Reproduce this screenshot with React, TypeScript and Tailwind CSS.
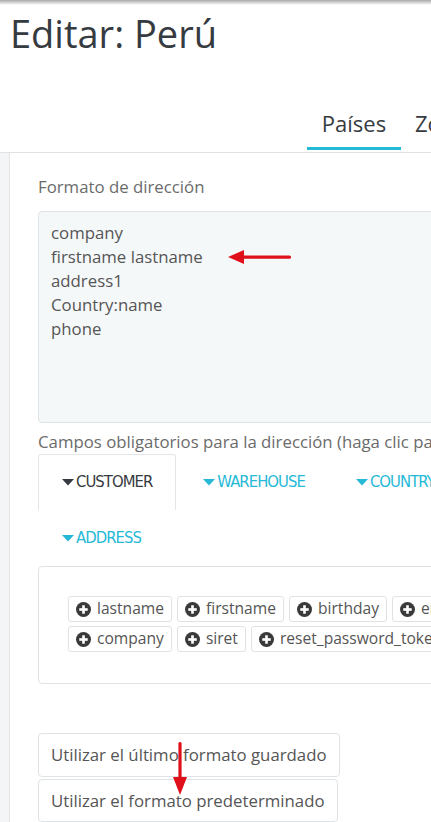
import React from "react";

const Caret = ({ color }: { color: string }) => (
  <svg width="12" height="7" viewBox="0 0 12 7" className="mr-[2px]">
    <polygon points="0,0 12,0 6,6.5" fill={color} />
  </svg>
);

const Plus = () => (
  <svg width="15" height="15" viewBox="0 0 16 16" className="mr-[6px] shrink-0">
    <circle cx="8" cy="8" r="8" fill="#3a3a3a" />
    <rect x="3.5" y="6.6" width="9" height="2.8" fill="#fff" />
    <rect x="6.6" y="3.5" width="2.8" height="9" fill="#fff" />
  </svg>
);

const Tag = ({ label }: { label: string }) => (
  <div className="flex items-center h-[26px] px-[7px] border border-[#dfe3e6] rounded-[3px] bg-white text-[15.6px] text-[#555] whitespace-nowrap shrink-0">
    <Plus />
    {label}
  </div>
);

const Tab = ({ label, active }: { label: string; active?: boolean }) => (
  <div
    className={
      "flex items-center justify-center h-[56px] px-[23px] mr-[3px] font-['DejaVu_Sans_Condensed','DejaVu_Sans',sans-serif] [font-stretch:condensed] text-[16.5px] tracking-[-0.95px] " +
      (active
        ? "border border-b-0 border-[#e3e6e8] rounded-t-[3px] text-[#363a41]"
        : "border border-transparent text-[#25b9d7]")
    }
  >
    <Caret color={active ? "#363a41" : "#25b9d7"} />
    {label}
  </div>
);

export default function App() {
  return (
    <div className="relative w-[431px] h-[822px] overflow-hidden bg-white font-['Open_Sans',sans-serif]">
      {/* top shadow */}
      <div className="absolute top-0 left-0 right-0 h-[5px] bg-gradient-to-b from-[#a9a9a9] to-transparent" />

      {/* title */}
      <div className="pl-[10px] pt-[10px] h-[66px] text-[38px] leading-[46px] text-[#363a41] whitespace-nowrap">
        Editar: Perú
      </div>

      {/* tab bar */}
      <div className="flex items-end h-[87px] pl-[307px] border-b border-[#e2e2e2] whitespace-nowrap">
        <div className="flex flex-col items-center w-[94px] shrink-0">
          <div className="text-[22px] leading-[30px] text-[#363a41]">Países</div>
          <div className="mt-[9px] mb-[2px] h-[3px] w-full bg-[#25b9d7]" />
        </div>
        <div className="ml-[14px] text-[22px] leading-[30px] text-[#363a41] self-start mt-[42px]">Zonas</div>
      </div>

      {/* body */}
      <div className="flex h-[700px]">
        <div className="w-[10px] shrink-0 bg-[#f4f5f6] border-r border-[#e3e5e7]" />
        <div className="w-[700px] shrink-0 bg-white pl-[28px] pt-[22px]">
          <div className="text-[16.8px] leading-[24px] text-[#6b6b6b]">Formato de dirección</div>
          <div className="mt-[12px] w-[600px] h-[212px] bg-[#f5f8f9] border border-[#dde3e6] rounded-[4px] pl-[12px] pt-[9px] text-[16.8px] leading-[24px] text-[#555]">
            <div>company</div>
            <div>firstname lastname</div>
            <div>address1</div>
            <div>Country:name</div>
            <div>phone</div>
          </div>
          <div className="mt-[7px] text-[16.8px] leading-[24px] text-[#6b6b6b] whitespace-nowrap">
            Campos obligatorios para la dirección (haga clic para más detalles):
          </div>
          <div className="flex flex-wrap w-[480px]">
            <Tab label="CUSTOMER" active />
            <Tab label="WAREHOUSE" />
            <Tab label="COUNTRY" />
            <Tab label="ADDRESS" />
          </div>
          <div className="w-[600px] h-[118px] border border-[#dfe3e6] rounded-[4px] pl-[29px] pt-[29px] flex flex-col gap-[4px]">
            <div className="flex gap-[5px]">
              <Tag label="lastname" />
              <Tag label="firstname" />
              <Tag label="birthday" />
              <Tag label="email" />
              <Tag label="website" />
            </div>
            <div className="flex gap-[5px]">
              <Tag label="company" />
              <Tag label="siret" />
              <Tag label="reset_password_token" />
              <Tag label="reset_password_validity" />
            </div>
          </div>
          <div className="mt-[49px] flex flex-col gap-[2px] items-start">
            <div className="h-[44px] px-[12px] flex items-center border border-[#dfe3e6] rounded-[4px] text-[16.8px] text-[#555] whitespace-nowrap">
              Utilizar el último formato guardado
            </div>
            <div className="h-[43px] px-[12px] flex items-center border border-[#dfe3e6] rounded-[4px] text-[16.8px] text-[#555] whitespace-nowrap">
              Utilizar el formato predeterminado
            </div>
          </div>
        </div>
      </div>

      {/* red arrows overlay */}
      <svg className="absolute left-[226px] top-[249px]" width="68" height="16" viewBox="0 0 68 16">
        <rect x="14" y="6.5" width="51" height="3.2" rx="1.5" fill="#e0101a" />
        <polygon points="2,8 18,1 18,15" fill="#e0101a" />
      </svg>
      <svg className="absolute left-[172px] top-[740px]" width="16" height="58" viewBox="0 0 16 58">
        <rect x="6.4" y="2" width="3.2" height="42" rx="1.5" fill="#e0101a" />
        <polygon points="8,55 1,37 15,37" fill="#e0101a" />
      </svg>
    </div>
  );
}
